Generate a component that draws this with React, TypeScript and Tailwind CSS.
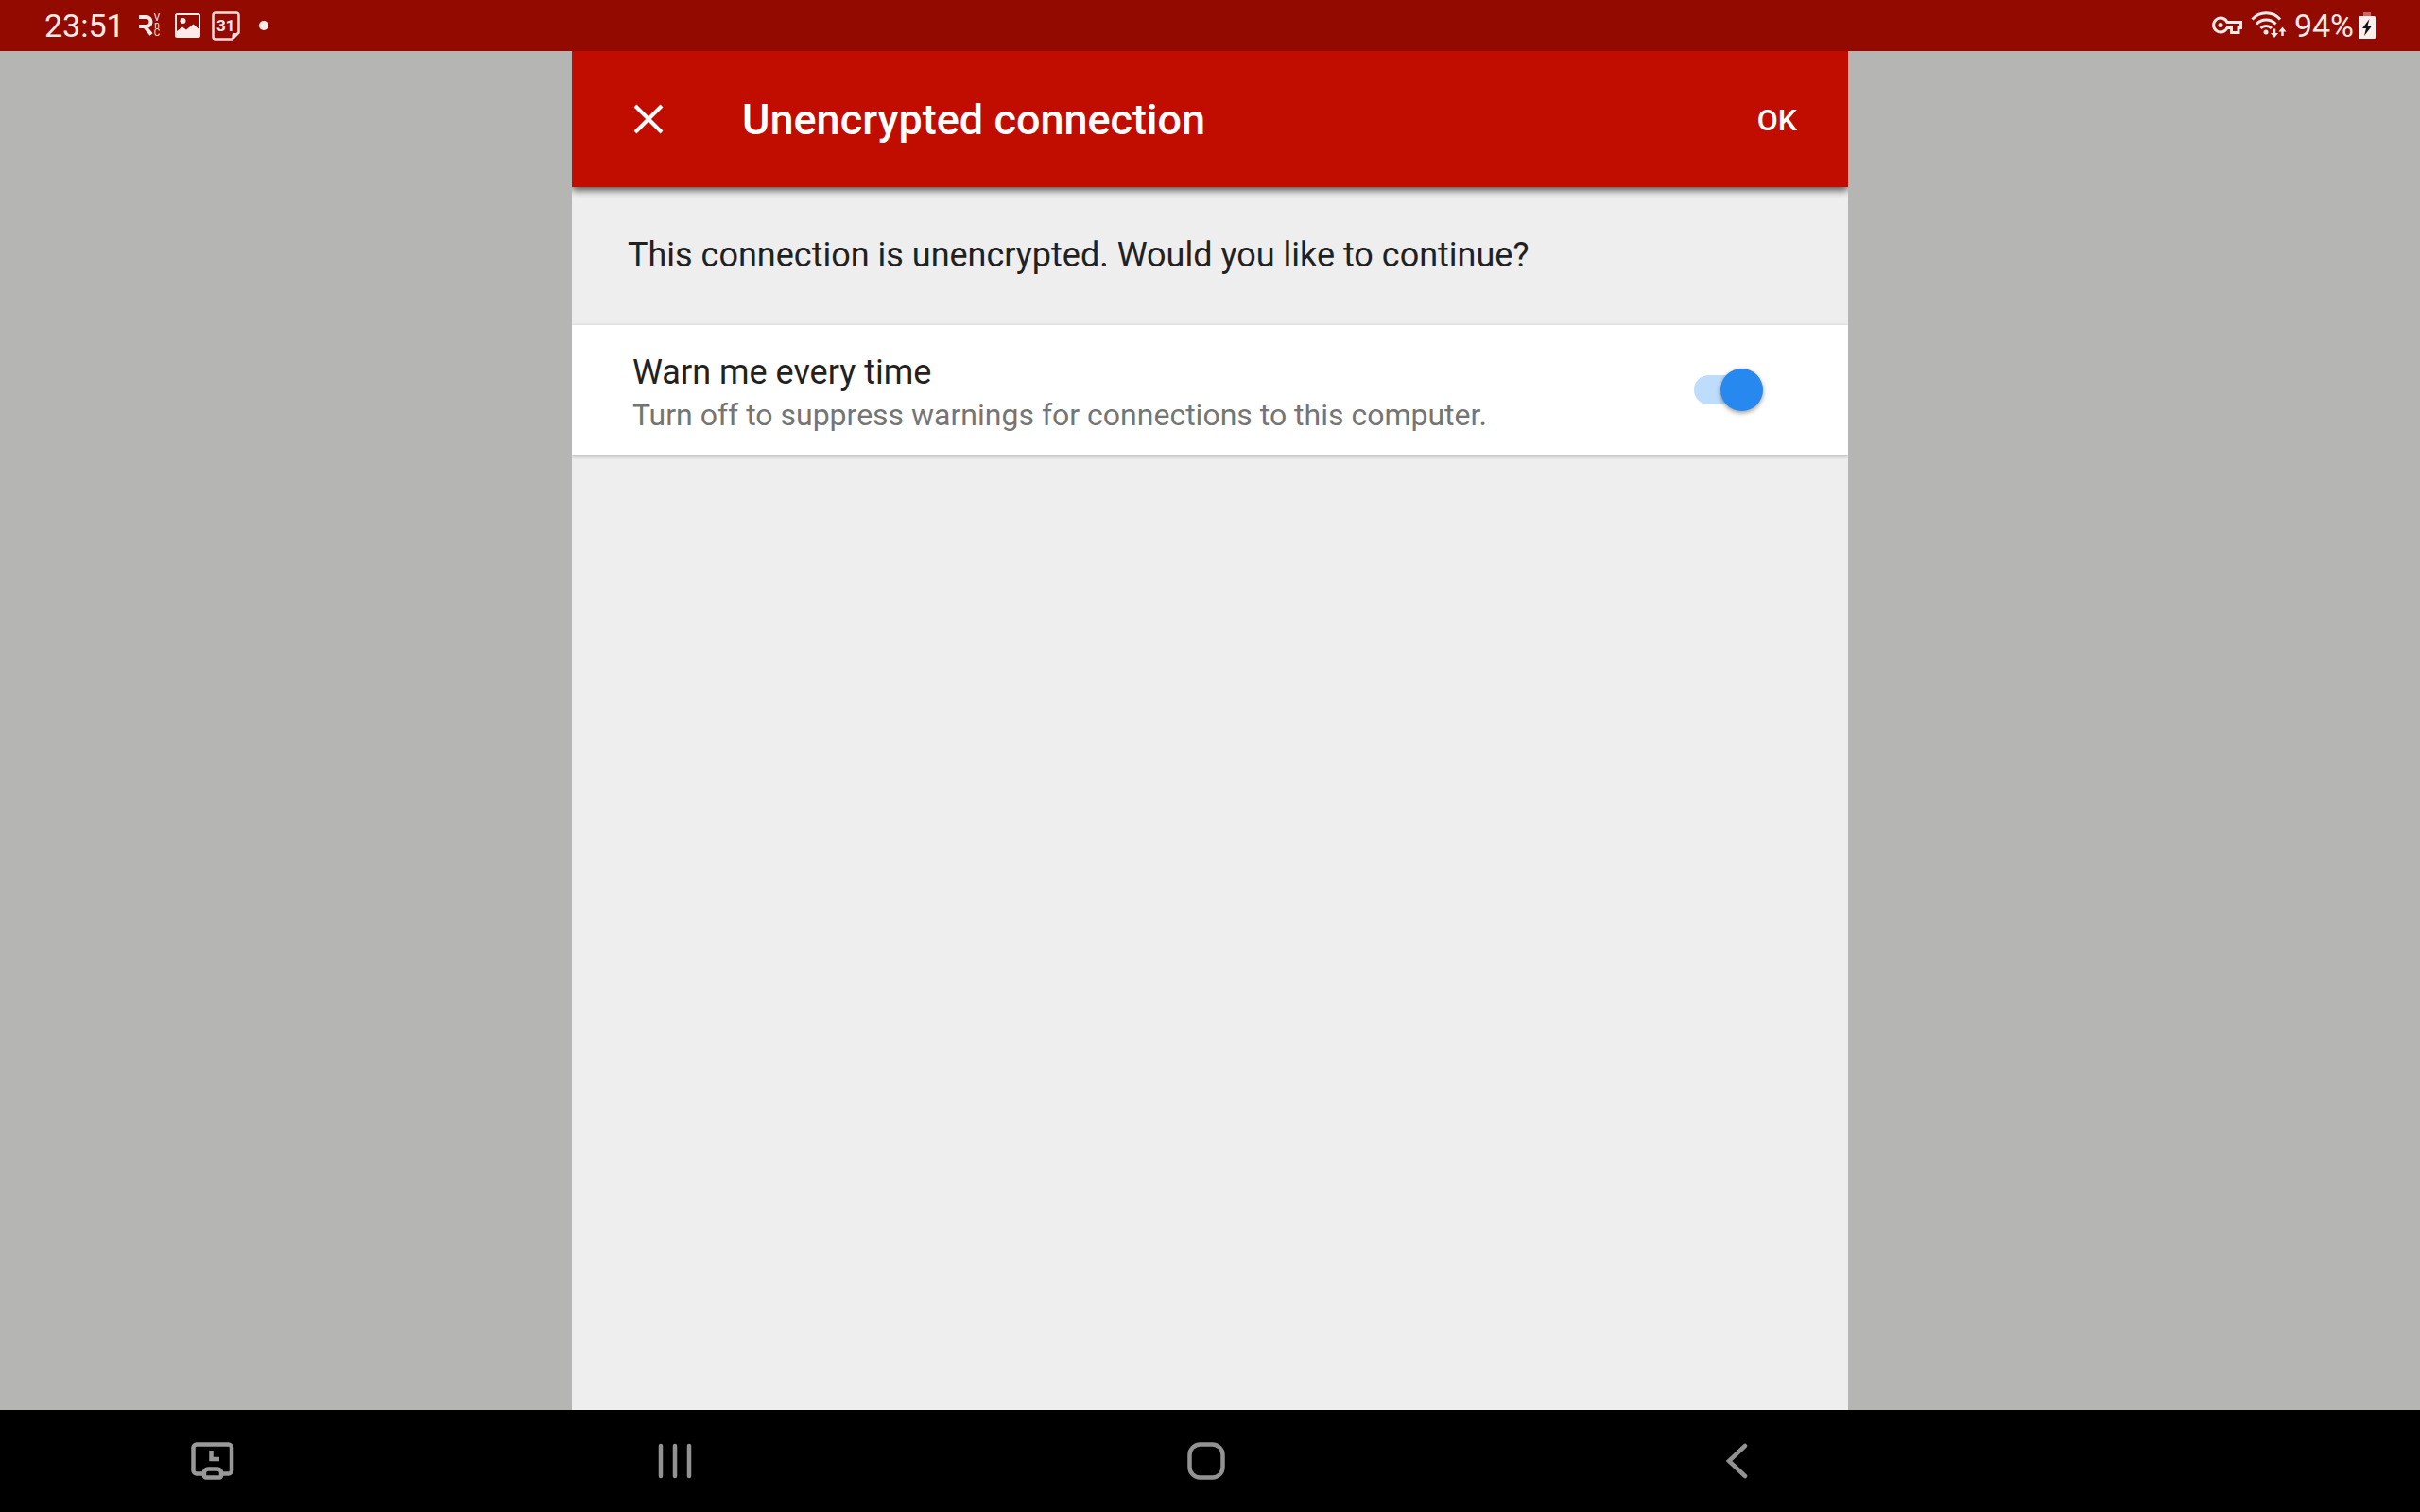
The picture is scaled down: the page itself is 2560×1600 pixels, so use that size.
import { useState } from "react";

function VncIcon() {
  return (
    <div className="flex h-[26px] w-[25px] items-center" aria-hidden="true">
      <svg width="17" height="22" viewBox="0 0 17 22" fill="none" stroke="#fbeaea" strokeWidth="4">
        <path d="M1 2H8.500a5 5 0 0 1 0 10H1M7.500 12.500l6.500 8" />
      </svg>
      <span className="flex flex-col items-center text-[10px] leading-[8px] text-[#fbeaea]">
        <span>V</span>
        <span>n</span>
        <span>C</span>
      </span>
    </div>
  );
}

function PictureIcon() {
  return (
    <svg width="27" height="26" viewBox="0 0 27 26" aria-hidden="true">
      <path
        fill="#fbeaea"
        fillRule="evenodd"
        d="M2.500 0h22a2.500 2.500 0 0 1 2.500 2.500v21a2.500 2.500 0 0 1-2.500 2.500h-22a2.500 2.500 0 0 1-2.500-2.500v-21a2.500 2.500 0 0 1 2.500-2.500zM2 2v17l6-4.500 4 3 7.500-6 5.500 5V2z"
      />
      <circle cx="8.500" cy="8" r="3" fill="#fbeaea" />
    </svg>
  );
}

function CalendarIcon() {
  return (
    <div className="relative flex h-[31px] w-[30px] items-center justify-center">
      <svg className="absolute inset-0" width="30" height="31" viewBox="0 0 30 31" fill="none" stroke="#fbdcdc" strokeWidth="2.500" aria-hidden="true">
        <path d="M4 1.500h22a2.500 2.500 0 0 1 2.500 2.500V22.500L21.500 29.500H4a2.500 2.500 0 0 1-2.500-2.500V4A2.500 2.500 0 0 1 4 1.500z" strokeLinejoin="round" />
        <path d="M28 23h-4.500a2 2 0 0 0-2 2V29z" fill="#fbdcdc" stroke="none" />
      </svg>
      <span className="text-[17px] leading-none font-bold text-[#fbeaea]">31</span>
    </div>
  );
}

function KeyIcon() {
  return (
    <svg width="32" height="20" viewBox="0 0 32 20" fill="none" stroke="#fbeaea" aria-hidden="true">
      <path d="M16 6.500A7.500 7.500 0 1 0 16 12.500H20.500V17.500H28V12.500H30.500V6.500z" strokeWidth="3" strokeLinejoin="miter" />
      <circle cx="9" cy="9.500" r="2.500" fill="#fbeaea" stroke="none" />
    </svg>
  );
}

function WifiIcon() {
  return (
    <svg width="38" height="30" viewBox="0 0 38 30" fill="none" stroke="#fbeaea" strokeWidth="3" aria-hidden="true">
      <path d="M1.500 8.500a19.500 19.500 0 0 1 29.500 0M6 13.500a14 14 0 0 1 20.500 0M10.500 18a8 8 0 0 1 11.500 0" />
      <circle cx="16" cy="22" r="2.500" fill="#fbeaea" stroke="none" />
      <path d="M25 18.500v6M33.500 26v-6" strokeWidth="2.500" />
      <path d="M21 23h8l-4 5zM29.500 21.500h8l-4-5z" fill="#fbeaea" stroke="none" />
    </svg>
  );
}

function BatteryIcon() {
  return (
    <svg width="18" height="28" viewBox="0 0 18 28" aria-hidden="true">
      <path d="M5 0h8v4H5z" fill="#c46a66" />
      <path d="M0 5.500A1.500 1.500 0 0 1 1.500 4h15A1.500 1.500 0 0 1 18 5.500v21a1.500 1.500 0 0 1-1.500 1.500h-15A1.500 1.500 0 0 1 0 26.500z" fill="#fbeeee" />
      <path d="M11.500 7L4 17h4l-2 8 8-10.500H9.500z" fill="#111" />
    </svg>
  );
}

function StatusBar() {
  return (
    <div className="flex h-[54px] shrink-0 items-center justify-between bg-[#930a00] px-[47px] text-[#fbeaea]">
      <div className="flex items-center">
        <time className="mr-[14px] text-[34px] leading-[54px]">23:51</time>
        <VncIcon />
        <span className="w-[14px]" />
        <PictureIcon />
        <span className="w-3" />
        <CalendarIcon />
        <span className="ml-5 size-[10px] rounded-full bg-[#fbeaea]" />
      </div>
      <div className="flex items-center">
        <KeyIcon />
        <span className="w-[9px]" />
        <WifiIcon />
        <span className="ml-2 text-[34px] leading-[54px]">94%</span>
        <span className="w-[5px]" />
        <BatteryIcon />
      </div>
    </div>
  );
}

function NavigationBar() {
  return (
    <nav className="grid h-[108px] shrink-0 grid-cols-[433fr_562fr_562fr_562fr_441fr] bg-black">
      <button type="button" aria-label="Screen timeout" className="flex items-center justify-center pl-4">
        <svg width="46" height="40" viewBox="0 0 46 40" fill="none" stroke="#999" strokeWidth="4.500">
          <path d="M13 33.500H6a3.500 3.500 0 0 1-3.500-3.500V6a3.500 3.500 0 0 1 3.500-3.500H39.500a3.500 3.500 0 0 1 3.500 3.500V30a3.500 3.500 0 0 1-3.500 3.500H33" />
          <path d="M18 28.500H28a4 4 0 0 1 4 4v3a2 2 0 0 1-2 2H16a2 2 0 0 1-2-2v-3a4 4 0 0 1 4-4z" />
          <path d="M21.500 9v9h8.500" />
        </svg>
      </button>
      <button type="button" aria-label="Recent apps" className="flex items-center justify-center">
        <svg width="36" height="38" viewBox="0 0 36 38" stroke="#929292" strokeWidth="4.500" strokeLinecap="round">
          <path d="M3 3v32M18 3v32M33 3v32" />
        </svg>
      </button>
      <button type="button" aria-label="Home" className="flex items-center justify-center">
        <svg width="40" height="40" viewBox="0 0 40 40" fill="none" stroke="#929292" strokeWidth="4.500">
          <rect x="2.500" y="2.500" width="35" height="35" rx="11" />
        </svg>
      </button>
      <button type="button" aria-label="Back" className="flex items-center justify-center">
        <svg width="24" height="38" viewBox="0 0 24 38" fill="none" stroke="#929292" strokeWidth="4.500" strokeLinecap="round">
          <path d="M20 3L3 19l17 16" />
        </svg>
      </button>
    </nav>
  );
}

export default function App() {
  const [warn, setWarn] = useState(true);
  return (
    <div className="flex min-h-screen flex-col bg-[#b5b5b3] font-['Roboto',sans-serif]">
      <StatusBar />
      <main className="mx-auto flex w-full max-w-[1350px] grow flex-col bg-[#eeeeee]">
        <header className="flex h-36 items-center bg-[#c00d00] pr-[54px] pl-[65px] text-white shadow-[0_3px_8px_rgba(0,0,0,0.7)] [clip-path:inset(0_0_-12px_0)]">
          <button type="button" aria-label="Close">
            <svg width="32" height="32" viewBox="0 0 32 32" stroke="white" strokeWidth="4">
              <path d="M2 2l28 28M30 2L2 30" />
            </svg>
          </button>
          <h1 className="ml-[83px] grow pt-[2px] text-[45px] leading-[54px] font-medium">Unencrypted connection</h1>
          <button type="button" className="pt-px text-[32px] font-medium">
            OK
          </button>
        </header>
        <p className="px-[59px] pt-12 pb-[50px] text-[36px] leading-[48px] text-[#212121]">
          This connection is unencrypted. Would you like to continue?
        </p>
        <label className="flex h-[138px] items-center justify-between bg-white pr-[90px] pb-[2px] pl-16 shadow-[0_1px_4px_rgba(0,0,0,0.25)] [clip-path:inset(-4px_0)]">
          <span className="flex flex-col pt-2">
            <span className="text-[36px] leading-[46px] text-[#212121]">Warn me every time</span>
            <span className="text-[32px] leading-[44px] text-[#757575]">
              Turn off to suppress warnings for connections to this computer.
            </span>
          </span>
          <span className="relative flex h-[45px] w-[73px] items-center">
            <input
              type="checkbox"
              role="switch"
              checked={warn}
              onChange={(e) => setWarn(e.target.checked)}
              className="peer h-[31px] w-full appearance-none rounded-full bg-[#bbbbbb] checked:bg-[#bedcfb]"
            />
            <span className="pointer-events-none absolute top-0 left-0 size-[45px] rounded-full bg-[#fafafa] shadow-[0_2px_5px_rgba(0,0,0,0.4)] peer-checked:right-0 peer-checked:left-auto peer-checked:bg-[#2789f0]" />
          </span>
        </label>
      </main>
      <NavigationBar />
    </div>
  );
}
